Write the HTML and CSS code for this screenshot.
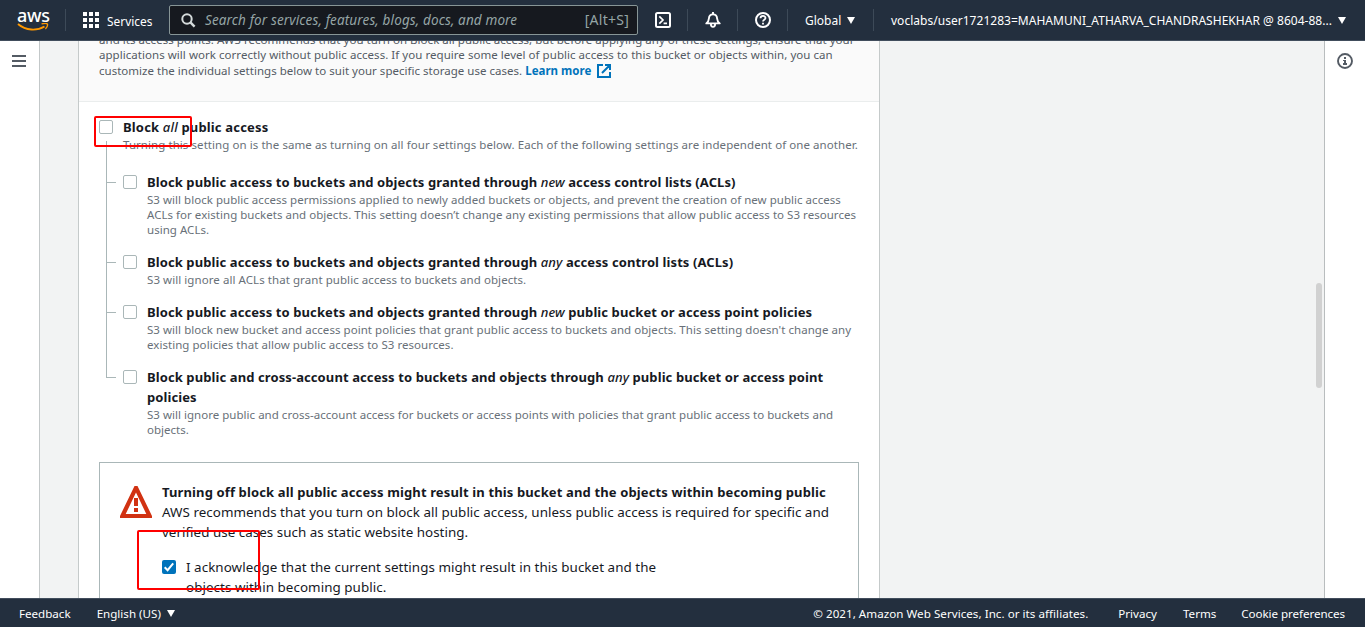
FILE: index.html
```html
<!DOCTYPE html>
<html lang="en">
<head>
<meta charset="utf-8">
<title>S3 Management Console</title>
<link rel="stylesheet" href="styles.css">
</head>
<body>
<header class="topbar">
  <div class="logo">
    <span class="logo-text">aws</span>
    <svg class="smile" width="32" height="9" viewBox="0 0 32 9"><path d="M1 1C9 8 20 8 27.500 3.500" fill="none" stroke="#f90" stroke-width="1.900"/><path d="M24.500 .9C27 .2 29.500 .2 30.300 .9C30.900 2 29.900 4.500 28.400 6" fill="none" stroke="#f90" stroke-width="1.300"/></svg>
  </div>
  <i class="sep"></i>
  <div class="services">
    <svg width="16" height="16" viewBox="0 0 16 16" fill="#fff"><path d="M0 0h4v4H0zM6 0h4v4H6zM12 0h4v4h-4zM0 6h4v4H0zM6 6h4v4H6zM12 6h4v4h-4zM0 12h4v4H0zM6 12h4v4H6zM12 12h4v4h-4z"/></svg>
    <span class="t-services">Services</span>
  </div>
  <div class="search">
    <svg width="15" height="15" viewBox="0 0 15 15" fill="none" stroke="#d5dbdb" stroke-width="2"><circle cx="6" cy="6" r="4.700"/><path d="M9.400 9.400L13.600 13.600" stroke-width="2.400"/></svg>
    <span class="placeholder">Search for services, features, blogs, docs, and more</span>
    <span class="hint">[Alt+S]</span>
  </div>
  <div class="tool tool-shell"><svg width="16" height="16" viewBox="0 0 16 16" fill="none" stroke="#fff" stroke-width="2"><rect x="1" y="1" width="14" height="14" rx="1.500"/><path d="M4.300 4.300L8 8L4.300 11.700M8.600 11.400H12" stroke-width="1.700"/></svg></div>
  <i class="sep"></i>
  <div class="tool"><svg width="16" height="16" viewBox="0 0 16 16" fill="none" stroke="#fff" stroke-width="1.900" stroke-linejoin="round"><path d="M1.300 11.400C3.500 9.800 3.800 8.300 3.900 6.500C4.100 3.800 5.500 2.400 8 2.400C10.500 2.400 11.900 3.800 12.100 6.500C12.200 8.300 12.500 9.800 14.700 11.400Z"/><path d="M8 0V2M5.900 12C5.900 15.800 10.100 15.800 10.100 12"/></svg></div>
  <i class="sep"></i>
  <div class="tool"><svg width="16" height="16" viewBox="0 0 16 16" fill="none" stroke="#fff" stroke-width="2"><circle cx="8" cy="8" r="7"/><path d="M5.500 6.300C5.500 3.200 10.500 3.200 10.500 6C10.500 7.800 8 7.700 8 9.500M8 10.800V12.600"  stroke-width="1.800"/></svg></div>
  <i class="sep"></i>
  <div class="region"><span class="t-region">Global</span><svg width="8" height="7" viewBox="0 0 8 7"><path d="M0 0h8L4 7z" fill="#fff"/></svg></div>
  <i class="sep"></i>
  <div class="account"><span class="t-account">voclabs/user1721283=MAHAMUNI_ATHARVA_CHANDRASHEKHAR @ 8604-88...</span><svg width="8" height="7" viewBox="0 0 8 7"><path d="M0 0h8L4 7z" fill="#fff"/></svg></div>
</header>

<main class="workspace">
  <aside class="rail rail-left"><svg width="14" height="12" viewBox="0 0 14 12" fill="#545b64"><path d="M0 0h14v2H0zM0 5h14v2H0zM0 10h14v2H0z"/></svg></aside>
  <div class="content">
    <section class="panel">
      <div class="intro">
        <p class="line i1">and its access points. AWS recommends that you turn on Block all public access, but before applying any of these settings, ensure that your</p>
        <p class="line i2">applications will work correctly without public access. If you require some level of public access to this bucket or objects within, you can</p>
        <p class="line i3">customize the individual settings below to suit your specific storage use cases. <a class="learn">Learn more<svg width="14" height="14" viewBox="0 0 14 14" fill="none" stroke="#0073bb" stroke-width="2"><path d="M6 1H1V13H13V8M8 1H13V6M13 1L5 9"/></svg></a></p>
      </div>
      <div class="settings">
        <div class="all-row">
          <div class="trunk"><span class="box"></span><i class="stem"></i></div>
          <div class="body">
            <h3 class="title a1">Block <em>all</em> public access</h3>
            <p class="desc d0">Turning this setting on is the same as turning on all four settings below. Each of the following settings are independent of one another.</p>
          </div>
        </div>
        <div class="item">
          <div class="branch"><i></i></div><span class="box"></span>
          <div class="body">
            <h3 class="title a2">Block public access to buckets and objects granted through <em>new</em> access control lists (ACLs)</h3>
            <p class="desc d1">S3 will block public access permissions applied to newly added buckets or objects, and prevent the creation of new public access<br>ACLs for existing buckets and objects. This setting doesn’t change any existing permissions that allow public access to S3 resources<br>using ACLs.</p>
          </div>
        </div>
        <div class="item">
          <div class="branch"><i></i></div><span class="box"></span>
          <div class="body">
            <h3 class="title a3">Block public access to buckets and objects granted through <em>any</em> access control lists (ACLs)</h3>
            <p class="desc d2">S3 will ignore all ACLs that grant public access to buckets and objects.</p>
          </div>
        </div>
        <div class="item">
          <div class="branch"><i></i></div><span class="box"></span>
          <div class="body">
            <h3 class="title a4">Block public access to buckets and objects granted through <em>new</em> public bucket or access point policies</h3>
            <p class="desc d3">S3 will block new bucket and access point policies that grant public access to buckets and objects. This setting doesn't change any<br>existing policies that allow public access to S3 resources.</p>
          </div>
        </div>
        <div class="item last">
          <div class="branch"><i></i></div><span class="box"></span>
          <div class="body">
            <h3 class="title a5">Block public and cross-account access to buckets and objects through <em>any</em> public bucket or access point<br>policies</h3>
            <p class="desc d4">S3 will ignore public and cross-account access for buckets or access points with policies that grant public access to buckets and<br>objects.</p>
          </div>
        </div>
        <div class="warning">
          <svg class="alert" width="32" height="32" viewBox="0 0 32 32" fill="#d13212"><path fill-rule="evenodd" d="M14.500 0H17.500L32 30V32H0V30ZM16 6.500L26.300 28H5.700Z"/><path d="M14 12h4v8h-4zM14 22h4v4h-4z"/></svg>
          <div class="warning-body">
            <h3 class="title w1">Turning off block all public access might result in this bucket and the objects within becoming public</h3>
            <p class="text w2">AWS recommends that you turn on block all public access, unless public access is required for specific and<br>verified use cases such as static website hosting.</p>
            <div class="ack">
              <span class="box checked"><svg width="14" height="14" viewBox="0 0 14 14"><path d="M2.700 7.300L5.600 10.200L11.200 3.400" fill="none" stroke="#fff" stroke-width="2"/></svg></span>
              <p class="text w3">I acknowledge that the current settings might result in this bucket and the<br>objects within becoming public.</p>
            </div>
          </div>
        </div>
      </div>
    </section>
  </div>
  <aside class="rail rail-right"><svg width="16" height="16" viewBox="0 0 16 16"><circle cx="8" cy="8" r="7" fill="none" stroke="#545b64" stroke-width="1.900"/><path d="M7 4h2v2H7zM6 7h3v3h1v2H6v-2h1V8H6z" fill="#545b64"/></svg></aside>
  <i class="thumb"></i>
</main>

<footer class="footer">
  <span class="f1">Feedback</span>
  <span class="f2">English (US)</span><svg class="f-caret" width="8" height="7" viewBox="0 0 8 7"><path d="M0 0h8L4 7z" fill="#fff"/></svg>
  <span class="f3">© 2021, Amazon Web Services, Inc. or its affiliates.</span>
  <span class="f4">Privacy</span>
  <span class="f5">Terms</span>
  <span class="f6">Cookie preferences</span>
</footer>
<i class="mark mark-all"></i>
<i class="mark mark-ack"></i>
</body>
</html>
```

FILE: styles.css
```css
* { box-sizing: border-box; }
html, body { margin: 0; height: 627px; overflow: hidden; }
body { display: flex; flex-direction: column; position: relative; background: #f2f3f3; color: #16191f; font: 13px/20px "Noto Sans", "Open Sans", sans-serif; white-space: nowrap; }
h3, p { margin: 0; }
svg { display: block; flex: none; }

.topbar { display: flex; align-items: center; flex: none; height: 41px; background: #232f3e; border-bottom: 1px solid #414d5c; color: #fff; font-size: 12px; }
.logo { width: 32px; margin-left: 17px; padding-top: 1px; }
.logo-text { display: block; height: 14px; font-size: 18px; line-height: 10px; font-weight: 500; letter-spacing: -.3px; }
.smile { margin-top: -1px; }
.sep { width: 1px; height: 22px; background: #3d4a58; flex: none; }
.logo + .sep { margin-left: 16px; }
.services { display: flex; align-items: center; gap: 8px; margin-left: 17px; width: 86px; }
.t-services, .t-region, .t-account { padding-top: 1px; }
.t-services { font-size: 11.9px; }
.t-account { letter-spacing: .025px; }
.search { display: flex; align-items: center; width: 469px; height: 30px; border: 1px solid #879596; border-radius: 2px; background: #16191f; color: #95a5a6; padding: 0 8px 0 11px; }
.placeholder { margin-left: 9px; font-size: 13.5px; letter-spacing: .13px; font-style: italic; }
.hint { margin-left: auto; font-size: 14px; letter-spacing: .25px; }
.tool { width: 49px; display: flex; justify-content: center; }
.tool-shell { padding-left: 1px; }
.region { display: flex; align-items: center; justify-content: space-between; width: 85px; padding: 0 18px 0 17px; }
.region svg, .account svg { margin-top: 0; }
.account { display: flex; align-items: center; justify-content: space-between; flex: 1; padding: 0 19px 0 17px; }

.workspace { display: flex; position: relative; flex: 1; min-height: 0; overflow: hidden; }
.rail { background: #fff; flex: none; }
.rail-left { width: 40px; border-right: 1px solid #c3c8c9; padding: 14px 0 0 12px; }
.rail-right { width: 41px; border-left: 1px solid #b9bdbe; padding: 12px 0 0 12px; }
.content { flex: 1; min-width: 0; padding-left: 38px; }
.thumb { position: absolute; right: 43px; top: 242px; width: 6px; height: 105px; border-radius: 3px; background: #d1d1d1; }
.panel { width: 802px; height: 620px; margin-top: -9px; background: #fff; border: solid #c5caca; border-width: 0 1px; }
.intro { height: 70px; background: #fafafa; border-bottom: 1px solid #eaeded; padding-left: 20px; color: #545b64; font-size: 11.5px; line-height: 16px; }
.i1 { height: 15px; letter-spacing: .037px; }
.i2 { letter-spacing: .043px; }
.i3 { letter-spacing: .02px; }
.learn { display: inline-flex; align-items: center; gap: 6px; height: 16px; color: #0073bb; font-weight: 700; vertical-align: top; }
.settings { padding: 15px 20px 0; }
.title { font-size: 13px; line-height: 20px; font-weight: 700; letter-spacing: .095px; }
.title em { font-weight: 500; }
.a1 { letter-spacing: .17px; }
.w1 { letter-spacing: .13px; }
.desc { color: #687078; font-size: 11.5px; line-height: 15px; }
.d0, .d2 { letter-spacing: .066px; }
.d1 { letter-spacing: .033px; }
.d3 { letter-spacing: .045px; }
.d4 { letter-spacing: .024px; }
.text { font-size: 13.4px; }
.w2 { letter-spacing: .03px; }
.w3 { letter-spacing: .05px; }
.box { display: block; width: 14px; height: 14px; margin-top: 3px; border: 1px solid #aab7b8; border-radius: 2px; flex: none; }
.box.checked { border: 0; background: #0073bb; }
.all-row { display: flex; gap: 10px; padding-left: 0; }
.all-row .body { padding-bottom: 20px; }
.trunk { display: flex; flex-direction: column; width: 14px; }
.stem { flex: 1; width: 1px; margin: 7px 0 0 7px; background: #aab7b8; }
.item { display: flex; }
.item .body { padding: 0 0 15px 10px; }
.item.last .body { padding-bottom: 25px; }
.branch { width: 17px; margin-left: 7px; border-left: 1px solid #aab7b8; flex: none; }
.branch i { display: block; width: 9px; height: 11px; border-bottom: 1px solid #aab7b8; }
.last .branch { height: 11px; }
.warning { display: flex; gap: 10px; width: 760px; height: 160px; padding: 19px 20px; border: 1px solid #aab7b8; }
.alert { margin-top: 4px; }
.ack { display: flex; gap: 10px; margin-top: 15px; }

.footer { display: flex; align-items: center; flex: none; height: 29px; background: #232f3e; border-top: 1px solid #414d5c; padding: 2px 20px 0 19px; color: #fff; font-size: 11.6px; }
.f2 { margin-left: 26px; }
.f-caret { margin-left: 6px; margin-top: -2px; }
.f3 { margin-left: auto; letter-spacing: .04px; }
.f4 { margin-left: 30px; }
.f5 { margin-left: 26px; }
.f6 { margin-left: 25px; letter-spacing: -.06px; }
.mark { position: absolute; border: 2px solid #f00; border-radius: 2px; }
.mark-all { left: 94px; top: 116px; width: 98px; height: 31px; }
.mark-ack { left: 137px; top: 530px; width: 123px; height: 60px; }
```
